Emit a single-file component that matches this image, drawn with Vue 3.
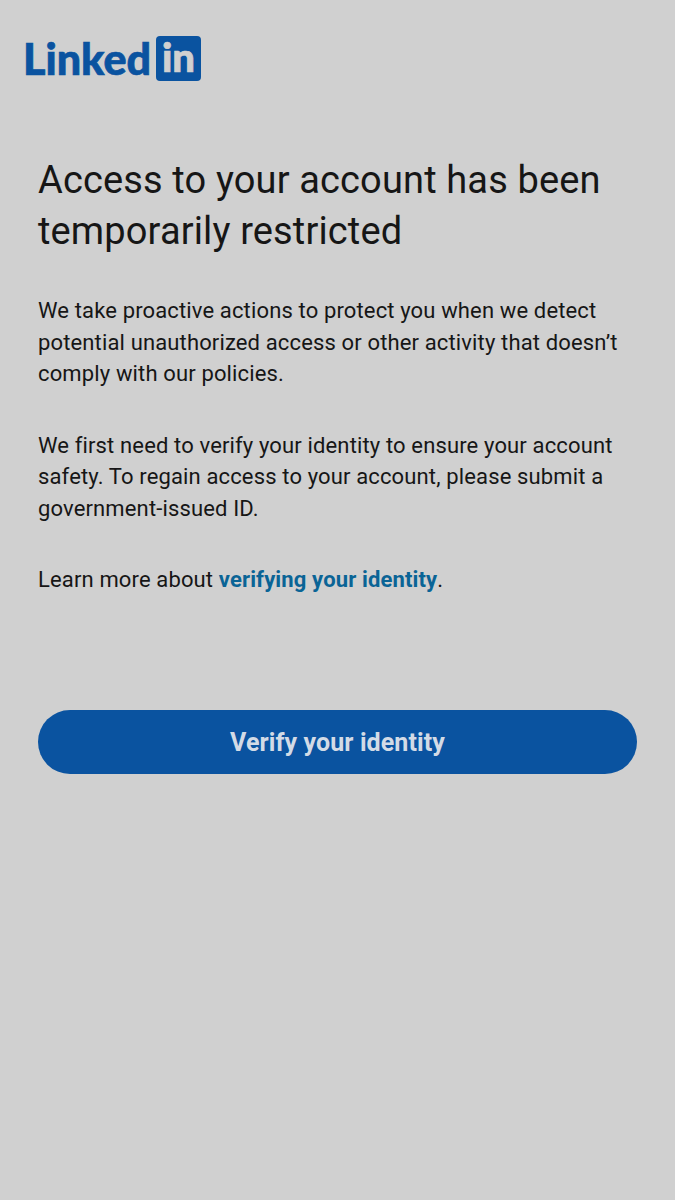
<template>
  <div class="page">
    <header class="logo" aria-label="LinkedIn">
      <span class="word">Linked</span>
      <span class="badge"><span class="badge-text">in</span></span>
    </header>
    <main class="content">
      <h1>Access to your account has been temporarily restricted</h1>
      <p>We take proactive actions to protect you when we detect potential unauthorized access or other activity that doesn’t comply with our policies.</p>
      <p>We first need to verify your identity to ensure your account safety. To regain access to your account, please submit a government-issued ID.</p>
      <p>Learn more about <a href="#">verifying your identity</a>.</p>
      <button type="button">Verify your identity</button>
    </main>
  </div>
</template>

<script setup>
</script>

<style>
html, body { margin: 0; background: #d0d0d0; }
</style>

<style scoped>
.page {
  min-height: 1200px;
  box-sizing: border-box;
  background: #d0d0d0;
  font-family: Roboto, "Liberation Sans", sans-serif;
  color: #161616;
  padding: 36px 38px 0;
}
.logo {
  display: flex;
  align-items: center;
  gap: 5px;
  height: 45px;
  margin-left: -15px;
}
.word {
  font-family: Lato, sans-serif;
  font-weight: 900;
  font-size: 43px;
  line-height: 45px;
  color: #0a53a0;
  -webkit-text-stroke: 0.7px #0a53a0;
}
.badge {
  width: 45px;
  height: 45px;
  border-radius: 4px;
  background: #0a53a0;
  display: flex;
  justify-content: center;
  align-items: flex-start;
  flex: none;
}
.badge-text {
  font-family: Lato, sans-serif;
  font-weight: 900;
  font-size: 40px;
  line-height: 43px;
  color: #d0d0d0;
  -webkit-text-stroke: 0.7px #d0d0d0;
}
.content { margin-top: 74px; }
h1 {
  margin: 0 0 38px;
  font-weight: 400;
  font-size: 38px;
  line-height: 51px;
  letter-spacing: 0.14px;
}
p {
  margin: 0 0 39.5px;
  font-size: 22px;
  line-height: 31.7px;
  letter-spacing: 0.14px;
}
a {
  font-weight: 700;
  color: #0a6496;
  text-decoration: none;
}
button {
  display: block;
  width: 100%;
  height: 64px;
  margin-top: 114px;
  padding: 2px 0 0;
  border: 0;
  border-radius: 32px;
  background: #0a53a0;
  color: #d3dbe6;
  font-family: inherit;
  font-weight: 700;
  font-size: 25px;
  letter-spacing: 0.1px;
}
</style>
